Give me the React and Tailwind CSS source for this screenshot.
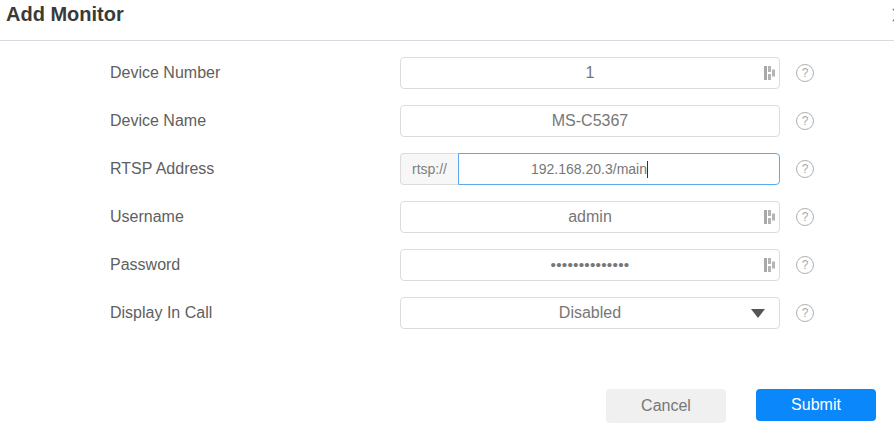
import React from 'react';

// key icon on the right of some inputs
const KeyIcon = () => (
  <svg width="12" height="15" viewBox="0 0 12 15" className="shrink-0">
    <rect x="0" y="0" width="3" height="14" fill="#a8a8a8" />
    <rect x="4" y="0" width="3" height="6" fill="#b4b4b4" />
    <rect x="4" y="8" width="3" height="6" fill="#b4b4b4" />
    <rect x="8" y="3.5" width="3" height="7" fill="#b4b4b4" />
  </svg>
);

const HelpIcon = () => (
  <div className="w-[18px] h-[18px] rounded-full border border-[#b0b0b0] flex items-center justify-center text-[12px] leading-none text-[#aaaaaa] ml-4 shrink-0">
    ?
  </div>
);

const Field = ({ children, icon }) => (
  <div className="relative w-[380px] h-8 border border-[#dcdcdc] rounded-[4px] flex items-center justify-center text-[#777777] text-[16px] bg-white">
    {children}
    {icon && <div className="absolute right-[3px] top-[8px]"><KeyIcon /></div>}
  </div>
);

const Row = ({ label, children }) => (
  <div className="flex items-center h-8 pl-[110px]">
    <div className="w-[290px] text-[16px] text-[#606060]">{label}</div>
    {children}
    <HelpIcon />
  </div>
);

export default function App() {
  return (
    <div className="relative w-[894px] h-[443px] overflow-hidden bg-white font-['Liberation_Sans',Arial,sans-serif]">
      <div className="h-[41px] border-b border-[#d5dbe0] flex items-start pl-[6px] pt-[4px]">
        <h1 className="text-[20px] font-bold text-[#3a3a3a] leading-none">Add Monitor</h1>
      </div>
      <svg width="14" height="14" viewBox="0 0 14 14" className="absolute left-[892px] top-[8px]">
        <path d="M1 1l12 12M13 1L1 13" stroke="#777777" strokeWidth="1.5" fill="none" />
      </svg>

      <div className="flex flex-col gap-4 pt-4">
        <Row label="Device Number">
          <Field icon>1</Field>
        </Row>
        <Row label="Device Name">
          <Field>MS-C5367</Field>
        </Row>
        <Row label="RTSP Address">
          <div className="w-[380px] h-8 flex">
            <div className="w-[58px] border border-r-0 border-[#dcdcdc] rounded-l-[4px] bg-[#f7f7f7] flex items-center justify-center text-[14px] text-[#808080]">
              rtsp://
            </div>
            <div className="flex-1 border border-[#5aa9f0] rounded-r-[4px] flex items-center pl-[72px] text-[14px] text-[#777777]">
              192.168.20.3/main
              <span className="w-px h-[17px] bg-[#333333]" />
            </div>
          </div>
        </Row>
        <Row label="Username">
          <Field icon>admin</Field>
        </Row>
        <Row label="Password">
          <Field icon><span className="text-[15.5px] tracking-[0.2px]">••••••••••••••</span></Field>
        </Row>
        <Row label="Display In Call">
          <Field>
            Disabled
            <div className="absolute right-[14px] top-[11px] w-0 h-0 border-l-[7px] border-r-[7px] border-t-[9px] border-l-transparent border-r-transparent border-t-[#555555]" />
          </Field>
        </Row>
      </div>

      <div className="flex justify-end gap-[30px] pr-[18px] pt-[60px] items-start">
        <button className="w-[120px] h-[34px] rounded-[4px] bg-[#f0f0f0] text-[16px] text-[#777777]">Cancel</button>
        <button className="w-[120px] h-8 rounded-[4px] bg-[#0a87fa] text-[16px] text-white">Submit</button>
      </div>
    </div>
  );
}
